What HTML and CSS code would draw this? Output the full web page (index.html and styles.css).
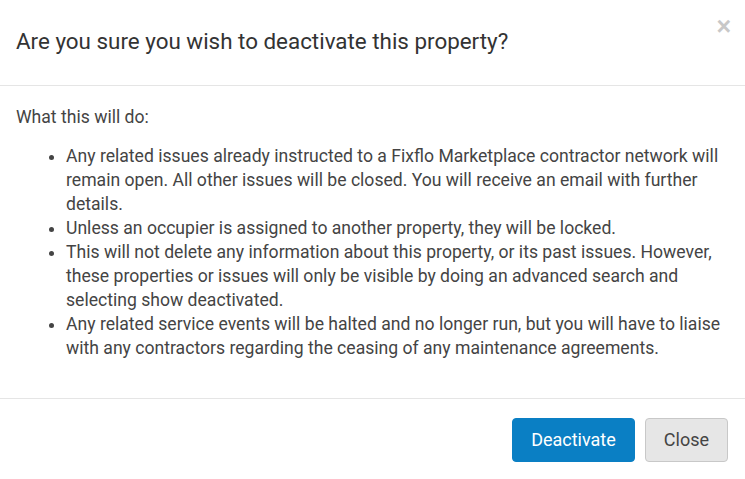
FILE: index.html
```html
<!DOCTYPE html>
<html lang="en">
<head>
<meta charset="utf-8">
<title>Deactivate property</title>
<link rel="stylesheet" href="styles.css">
</head>
<body>
<div class="modal">
  <div class="modal-header">
    <h4 class="modal-title">Are you sure you wish to deactivate this property?</h4>
    <button class="close" type="button" aria-label="Close">&times;</button>
  </div>
  <div class="modal-body">
    <p class="intro">What this will do:</p>
    <ul class="effects">
      <li>Any related issues already instructed to a Fixflo Marketplace contractor network will remain open. All other issues will be closed. You will receive an email with further details.</li>
      <li>Unless an occupier is assigned to another property, they will be locked.</li>
      <li>This will not delete any information about this property, or its past issues. However, these properties or issues will only be visible by doing an advanced search and selecting show deactivated.</li>
      <li>Any related service events will be halted and no longer run, but you will have to liaise with any contractors regarding the ceasing of any maintenance agreements.</li>
    </ul>
  </div>
  <div class="modal-footer">
    <button class="btn btn-primary" type="button">Deactivate</button>
    <button class="btn btn-default" type="button">Close</button>
  </div>
</div>
</body>
</html>
```

FILE: styles.css
```css
html, body {
  margin: 0;
  padding: 0;
  background: #fff;
}

body {
  font-family: Roboto, "Liberation Sans", Arial, sans-serif;
  color: #444;
  width: 745px;
  height: 479px;
  overflow: hidden;
}

.modal {
  display: flex;
  flex-direction: column;
}

.modal-header {
  display: flex;
  align-items: flex-start;
  justify-content: space-between;
  height: 86px;
  box-sizing: border-box;
  padding: 0 16px;
  border-bottom: 1px solid #e5e5e5;
}

.modal-title {
  margin: 0;
  padding-top: 26px;
  font-size: 22.4px;
  font-weight: 400;
  line-height: 30px;
  color: #333;
}

.close {
  margin: 13px -2px 0 0;
  padding: 0;
  border: 0;
  background: none;
  font-family: "Liberation Sans", Arial, sans-serif;
  font-size: 25px;
  font-weight: 700;
  line-height: 26px;
  color: #c8c8c8;
  cursor: pointer;
}

.modal-body {
  height: 313px;
  box-sizing: border-box;
  padding: 19px 16px 0;
  border-bottom: 1px solid #e5e5e5;
  font-size: 17.6px;
  line-height: 24px;
}

.intro {
  margin: 0 0 15px;
}

.effects {
  margin: 0;
  padding-left: 50px;
}

.modal-footer {
  display: flex;
  justify-content: flex-end;
  gap: 10px;
  padding: 19px 17px 0;
}

.btn {
  height: 44px;
  box-sizing: border-box;
  padding: 0 18px;
  border-radius: 4px;
  font-family: Roboto, "Liberation Sans", Arial, sans-serif;
  font-size: 18px;
  line-height: 42px;
  cursor: pointer;
}

.btn-primary {
  background: #0a7fc4;
  border: 1px solid #0a7fc4;
  color: #fff;
}

.btn-default {
  background: #e6e6e6;
  border: 1px solid #c8c8c8;
  color: #444;
}
```
